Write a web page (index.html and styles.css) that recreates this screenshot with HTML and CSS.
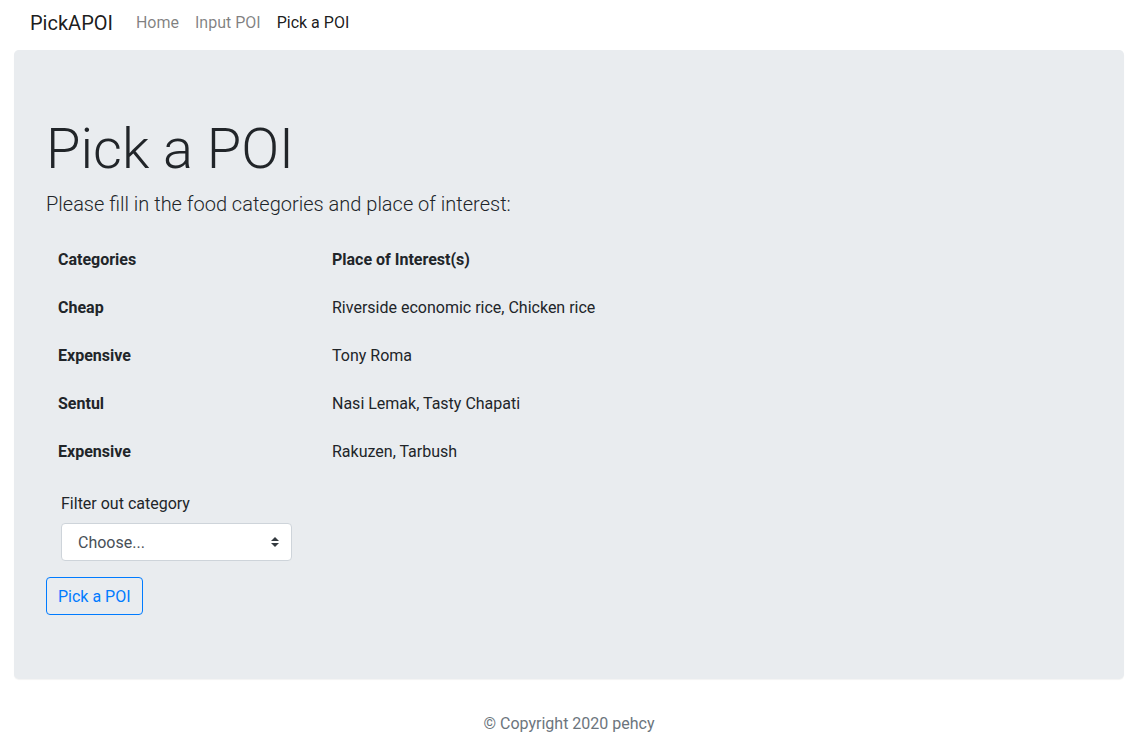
FILE: index.html
```html
<!DOCTYPE html>
<html lang="en">
<head>
<meta charset="utf-8">
<title>PickAPOI</title>
<link rel="stylesheet" href="styles.css">
</head>
<body>
<nav class="navbar">
  <a class="brand" href="#">PickAPOI</a>
  <ul class="nav">
    <li><a class="nav-link" href="#">Home</a></li>
    <li><a class="nav-link" href="#">Input POI</a></li>
    <li><a class="nav-link active" href="#">Pick a POI</a></li>
  </ul>
</nav>
<div class="container">
  <main class="jumbotron">
    <h1 class="display">Pick a POI</h1>
    <p class="lead">Please fill in the food categories and place of interest:</p>
    <table class="poi-table">
      <thead>
        <tr><th class="col-cat">Categories</th><th>Place of Interest(s)</th></tr>
      </thead>
      <tbody>
        <tr><th>Cheap</th><td>Riverside economic rice, Chicken rice</td></tr>
        <tr><th>Expensive</th><td>Tony Roma</td></tr>
        <tr><th>Sentul</th><td>Nasi Lemak, Tasty Chapati</td></tr>
        <tr><th>Expensive</th><td>Rakuzen, Tarbush</td></tr>
      </tbody>
    </table>
    <form class="form">
      <div class="form-group">
        <label for="cat">Filter out category</label>
        <select id="cat" class="custom-select">
          <option>Choose...</option>
        </select>
      </div>
      <button type="button" class="btn-outline">Pick a POI</button>
    </form>
  </main>
  <footer class="footer">© Copyright 2020 pehcy</footer>
</div>
</body>
</html>
```
FILE: styles.css
```css
* { box-sizing: border-box; }
html, body { margin: 0; padding: 0; }
body {
  font-family: Roboto, "Noto Sans", "Liberation Sans", sans-serif;
  font-size: 16px;
  line-height: 1.5;
  color: #212529;
  background: #fff;
}
.navbar {
  display: flex;
  align-items: center;
  height: 50px;
  padding: 0 30px 4px;
}
.brand {
  font-size: 20px;
  line-height: 30px;
  color: rgba(0,0,0,.9);
  text-decoration: none;
  margin-right: 15px;
}
.nav {
  display: flex;
  list-style: none;
  margin: 0;
  padding: 0;
}
.nav-link {
  display: block;
  padding: 0 8px;
  color: rgba(0,0,0,.5);
  text-decoration: none;
}
.nav-link.active { color: rgba(0,0,0,.9); }
.container {
  width: 1110px;
  margin-left: 14px;
}
.jumbotron {
  display: block;
  margin: 0 0 32px;
  padding: 64px 32px;
  background: #e9ecef;
  border-radius: 4.8px;
  box-shadow: 0 1px 1px rgba(0,0,0,.05);
}
.display {
  font-size: 56px;
  font-weight: 300;
  line-height: 1.2;
  margin: 0 0 8px;
  padding-top: 2px;
}
.lead {
  font-size: 20px;
  font-weight: 300;
  margin: -2px 0 16px;
}
.poi-table {
  width: 100%;
  border-collapse: collapse;
  margin-bottom: 16px;
}
.poi-table th, .poi-table td {
  padding: 13px 12px 11px;
  text-align: left;
  vertical-align: top;
}
.poi-table th { font-weight: 700; }
.col-cat { width: 274px; }
.form-group {
  padding: 0 15px;
  margin-bottom: 16px;
}
.form-group label {
  display: block;
  padding-top: 1px;
  margin-bottom: 7px;
}
.custom-select {
  display: block;
  width: 231px;
  height: 38px;
  padding: 7px 28px 5px 16px;
  font: inherit;
  color: #495057;
  background: #fff url("data:image/svg+xml,%3csvg xmlns='http://www.w3.org/2000/svg' width='4' height='5' viewBox='0 0 4 5'%3e%3cpath fill='%23343a40' d='M2 0L0 2h4zm0 5L0 3h4z'/%3e%3c/svg%3e") no-repeat right 12px center / 8px 10px;
  border: 1px solid #ced4da;
  border-radius: 4px;
  appearance: none;
  -webkit-appearance: none;
}
.btn-outline {
  font: inherit;
  height: 38px;
  padding: 7px 11px 5px;
  color: #007bff;
  background: transparent;
  border: 1px solid #007bff;
  border-radius: 4px;
}
.footer {
  text-align: center;
  color: #6c757d;
  line-height: 24px;
  padding-top: 1px;
  padding-bottom: 14px;
}
```
